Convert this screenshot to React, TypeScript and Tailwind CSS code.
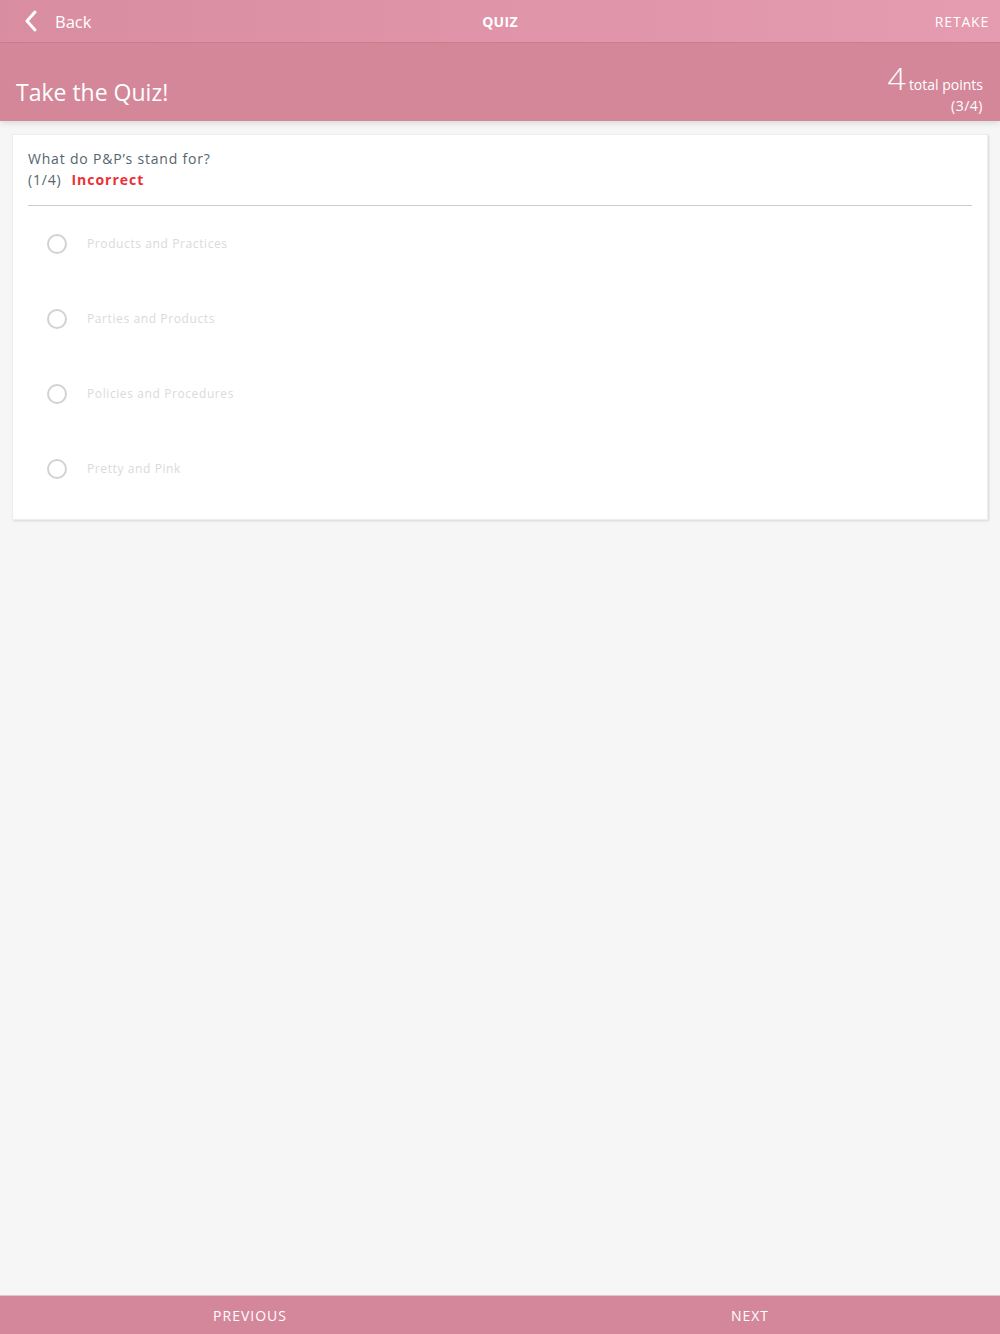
const options = [
  "Products and Practices",
  "Parties and Products",
  "Policies and Procedures",
  "Pretty and Pink",
];

function ChevronLeft() {
  return (
    <svg width="14" height="22" viewBox="0 0 14 22" fill="none">
      <path d="M11 2 L3 11 L11 20" stroke="white" strokeWidth="3" strokeLinecap="round" strokeLinejoin="round" />
    </svg>
  );
}

export default function App() {
  return (
    <div
      className="w-[1000px] h-[1334px] bg-[#f6f6f6] flex flex-col"
      style={{ fontFamily: '"Open Sans", "Liberation Sans", sans-serif' }}
    >
      <header className="shadow-[0_2px_6px_rgba(0,0,0,0.12)] relative z-10">
        <div className="h-[43px] bg-gradient-to-r from-[#d98da1] to-[#e59bb0] border-b border-[#c97b8f] flex items-center px-[24px] relative">
          <div className="flex items-center gap-[17px] text-white">
            <ChevronLeft />
            <span className="text-[16.5px] mt-[2px]">Back</span>
          </div>
          <div className="absolute left-0 right-0 text-center text-white text-[14px] font-bold tracking-[0.3px] pointer-events-none">
            QUIZ
          </div>
          <div className="ml-auto mr-[-13px] text-white text-[14px] tracking-[0.8px]">RETAKE</div>
        </div>
        <div className="h-[78px] bg-[#d38799] flex items-end justify-between pl-[16px] pr-[17px] pb-[5px]">
          <h1 className="text-white text-[23px] mb-[12px] leading-none">Take the Quiz!</h1>
          <div className="flex flex-col items-end text-white">
            <div className="flex items-baseline gap-[3px] leading-none">
              <span className="text-[32px] font-light">4</span>
              <span className="text-[14px]">total points</span>
            </div>
            <span className="text-[14px] tracking-[0.5px] mt-[1px]">(3/4)</span>
          </div>
        </div>
      </header>

      <main className="flex-1 px-[12px] pt-[13px]">
        <div className="bg-white shadow-[1px_1px_2px_rgba(0,0,0,0.12)] border border-[#eeeeee] px-[15px] pt-[13px] pb-[13px]">
          <p className="text-[14px] text-[#55656d] tracking-[0.8px] leading-[21px]">What do P&amp;P’s stand for?</p>
          <p className="text-[14px] text-[#55656d] tracking-[0.8px] leading-[21px]">
            (1/4)<span className="ml-[10px] font-bold text-[#ec2f36] tracking-[1px]">Incorrect</span>
          </p>
          <div className="mt-[15px] border-t border-[#cccccc]" />
          <div className="flex flex-col">
            {options.map((o) => (
              <div key={o} className="h-[75px] flex items-center pl-[19px] gap-[20px]">
                <span className="w-[20px] h-[20px] rounded-full border-2 border-[#d2d2d2] shrink-0" />
                <span className="text-[12px] text-[#dadada] tracking-[0.6px]">{o}</span>
              </div>
            ))}
          </div>
        </div>
      </main>

      <footer className="h-[39px] bg-[#d4879b] border-t border-[#e2c3cc] grid grid-cols-2 text-white text-[14px] tracking-[1px]">
        <div className="flex items-center justify-center">PREVIOUS</div>
        <div className="flex items-center justify-center">NEXT</div>
      </footer>
    </div>
  );
}
